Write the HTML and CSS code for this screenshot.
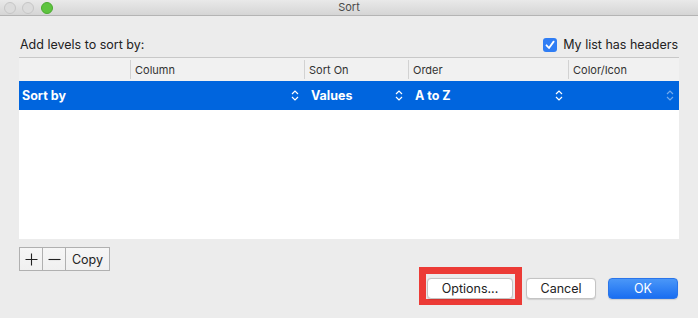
FILE: index.html
```html
<!DOCTYPE html>
<html>
<head>
<meta charset="utf-8">
<link rel="stylesheet" href="styles.css">
</head>
<body>
<div class="window">
  <div class="titlebar">
    <div class="lights">
      <span class="light gray"></span>
      <span class="light gray"></span>
      <span class="light green"></span>
    </div>
    <div class="title">Sort</div>
  </div>
  <div class="content">
    <div class="toprow">
      <span class="label">Add levels to sort by:</span>
      <label class="check">
        <span class="box"><svg width="14" height="14" viewBox="0 0 14 14"><path d="M3.5 7.3 L6 10 L10.6 3.6" fill="none" stroke="#fff" stroke-width="1.8" stroke-linecap="round" stroke-linejoin="round"/></svg></span>
        <span>My list has headers</span>
      </label>
    </div>
    <div class="table">
      <div class="thead">
        <div class="th"></div>
        <div class="th sep">Column</div>
        <div class="th sep">Sort On</div>
        <div class="th sep">Order</div>
        <div class="th sep">Color/Icon</div>
      </div>
      <div class="row">
        <div class="cell span2"><span>Sort by</span><svg class="chev" width="8" height="11" viewBox="0 0 8 11"><path d="M1 4 L4 1 L7 4 M1 7 L4 10 L7 7" fill="none" stroke="#fff" stroke-width="1.2"/></svg></div>
        <div class="cell"><span>Values</span><svg class="chev" width="8" height="11" viewBox="0 0 8 11"><path d="M1 4 L4 1 L7 4 M1 7 L4 10 L7 7" fill="none" stroke="#fff" stroke-width="1.2"/></svg></div>
        <div class="cell"><span>A to Z</span><svg class="chev" width="8" height="11" viewBox="0 0 8 11"><path d="M1 4 L4 1 L7 4 M1 7 L4 10 L7 7" fill="none" stroke="#fff" stroke-width="1.2"/></svg></div>
        <div class="cell"><span></span><svg class="chev faded" width="8" height="11" viewBox="0 0 8 11"><path d="M1 4 L4 1 L7 4 M1 7 L4 10 L7 7" fill="none" stroke="#fff" stroke-width="1.2"/></svg></div>
      </div>
      <div class="tbody"></div>
    </div>
    <div class="seg">
      <button class="segbtn icon"><svg width="13" height="13" viewBox="0 0 13 13"><path d="M6.5 0.5 V12.5 M0.5 6.5 H12.5" stroke="#222" stroke-width="1.1"/></svg></button>
      <button class="segbtn icon"><svg width="13" height="13" viewBox="0 0 13 13"><path d="M0.5 6.5 H12.5" stroke="#222" stroke-width="1.1"/></svg></button>
      <button class="segbtn text">Copy</button>
    </div>
    <div class="actions">
      <div class="highlight"><button class="btn">Options...</button></div>
      <button class="btn">Cancel</button>
      <button class="btn primary">OK</button>
    </div>
  </div>
</div>
</body>
</html>
```

FILE: styles.css
```css
html, body {
  margin: 0;
  padding: 0;
}
body {
  width: 698px;
  height: 318px;
  overflow: hidden;
  background: #ececec;
  font-family: "Inter", "Liberation Sans", sans-serif;
  color: #222;
}
.window {
  width: 698px;
  height: 318px;
  display: flex;
  flex-direction: column;
}
.titlebar {
  height: 15px;
  border-bottom: 1px solid #b4b4b4;
  background: linear-gradient(#e9e9e9, #d5d5d5);
  position: relative;
  display: flex;
  align-items: center;
  justify-content: center;
}
.lights {
  position: absolute;
  left: 4px;
  top: 2px;
  display: flex;
  gap: 6px;
}
.light {
  width: 10px;
  height: 10px;
  border-radius: 50%;
  box-sizing: content-box;
}
.light.gray {
  background: #dcdcdc;
  border: 1px solid #c6c6c6;
}
.light.green {
  background: #5ec43f;
  border: 1px solid #4aaa30;
  margin-left: 1px;
}
.title {
  font-size: 11px;
  color: #4a4a4a;
  line-height: 15px;
}
.content {
  padding: 0 19px;
  display: flex;
  flex-direction: column;
  flex: 1;
}
.toprow {
  height: 41px;
  flex: none;
  display: flex;
  align-items: flex-end;
  justify-content: space-between;
  box-sizing: border-box;
  padding-bottom: 5px;
  font-size: 12.5px;
}
.label {
  padding-left: 1px;
  line-height: 15px;
}
.check {
  display: flex;
  align-items: center;
  gap: 6px;
  line-height: 15px;
  margin-right: 1px;
}
.box {
  width: 14px;
  height: 14px;
  border-radius: 3px;
  background: #2f7df4;
  display: flex;
}
.table {
  flex: none;
  display: flex;
  flex-direction: column;
  border-top: 1px solid #c8c8c8;
}
.thead, .row {
  display: grid;
  grid-template-columns: 111px 174px 104px 160px 111px;
}
.thead {
  height: 23px;
  background: #f1f1f1;
  font-size: 11px;
  color: #333;
}
.th {
  display: flex;
  align-items: center;
  padding-left: 5px;
}
.th.sep {
  box-shadow: inset 1px 0 0 #d2d2d2;
  margin: 2px 0 2px;
}
.row {
  height: 29px;
  background: #0065de;
  color: #fff;
  font-size: 12.5px;
  font-weight: bold;
}
.cell {
  display: flex;
  align-items: center;
  justify-content: space-between;
  padding: 0 5px 0 7px;
}
.cell.span2 {
  grid-column: span 2;
  padding-left: 3px;
}
.chev.faded {
  opacity: 0.45;
}
.tbody {
  height: 129px;
  background: #fff;
}
.seg {
  flex: none;
  margin-top: 8px;
  display: flex;
  align-self: flex-start;
  border: 1px solid #b0b0b0;
  height: 24px;
  box-sizing: border-box;
}
.segbtn {
  margin: 0;
  border: 0;
  background: linear-gradient(#f6f6f6, #f0f0f0);
  height: 100%;
  font-family: inherit;
  font-size: 12.5px;
  color: #222;
  padding: 0;
  display: flex;
  align-items: center;
  justify-content: center;
}
.segbtn + .segbtn {
  border-left: 1px solid #b0b0b0;
}
.segbtn.icon:first-child {
  width: 22px;
}
.segbtn.icon {
  width: 23px;
}
.segbtn.text {
  width: 44px;
}
.actions {
  flex: none;
  margin-top: 7px;
  display: flex;
  justify-content: flex-end;
  align-items: flex-start;
  gap: 12px;
  padding-right: 1px;
}
.highlight {
  border: 7px solid #ec3b36;
  border-bottom-width: 6px;
  padding: 4px 2px 0 1px;
  margin: -11px -8px -6px 0;
}
.btn {
  height: 21px;
  border-radius: 4px;
  border: 1px solid #c4c4c4;
  background: #fff;
  font-family: inherit;
  font-size: 12.5px;
  color: #222;
  padding: 0;
  box-shadow: 0 0.5px 1px rgba(0,0,0,0.12);
  width: 70px;
  display: block;
}
.highlight .btn {
  width: 86px;
}
.btn.primary {
  color: #fff;
  background: linear-gradient(#4a97f8, #1a6ef1);
  border-color: #2a75ea;
}
```
